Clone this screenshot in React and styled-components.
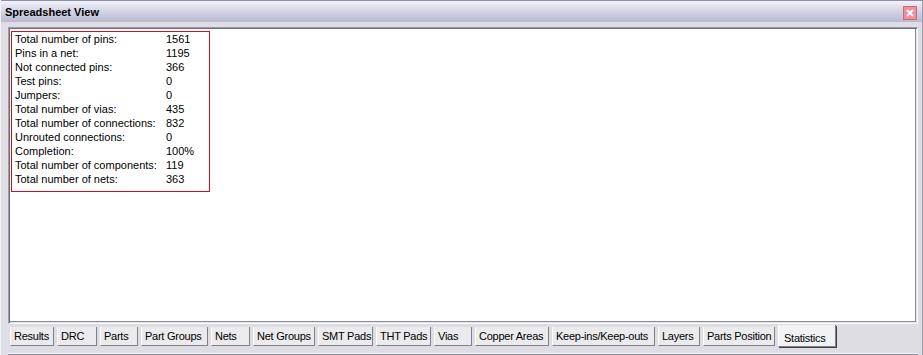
import React from 'react';
import styled, { createGlobalStyle } from 'styled-components';

const GlobalStyle = createGlobalStyle`
  html, body {
    margin: 0;
    padding: 0;
    background: #dedde4;
  }
  body {
    font-family: Tahoma, "Liberation Sans", Arial, sans-serif;
    font-size: 11px;
    color: #000;
  }
`;

const Window = styled.div`
  width: 923px;
  height: 355px;
  box-sizing: border-box;
  display: flex;
  flex-direction: column;
  background: #dedde4;
  border-left: 1px solid #f4f4f8;
  border-right: 1px solid #9a9aa8;
`;

const TitleBar = styled.div`
  height: 22px;
  flex-shrink: 0;
  display: flex;
  align-items: center;
  justify-content: space-between;
  padding: 0 5px 0 4px;
  box-sizing: border-box;
  border-top: 1px solid #8c8cac;
  background: linear-gradient(to bottom, #f2f2f8 0%, #d6d6e6 45%, #b9b9d2 100%);
`;

const Title = styled.span`
  font-weight: bold;
  font-size: 11px;
  line-height: 13px;
  margin-top: 2px;
`;

const CloseButton = styled.div`
  width: 12px;
  height: 12px;
  margin-top: 3px;
  border: 1px solid #c46a78;
  background: #f0909c;
  display: flex;
  align-items: center;
  justify-content: center;
`;

const Body = styled.div`
  flex: 1;
  display: flex;
  flex-direction: column;
  padding: 5px 4px 0 7px;
  min-height: 0;
`;

const Panel = styled.div`
  height: 297px;
  flex-shrink: 0;
  box-sizing: border-box;
  background: #fff;
  border-top: 1px solid #9c9ca6;
  border-left: 1px solid #9c9ca6;
  border-right: 1px solid #f8f8fa;
  border-bottom: 1px solid #f8f8fa;
  box-shadow: inset 1px 1px 0 #6e6e76, inset -1px -1px 0 #e6e6ea, inset -2px -2px 0 #8a8a94;
  padding: 3px 0 0 2px;
`;

const StatsBox = styled.div`
  width: 199px;
  box-sizing: border-box;
  border: 1px solid #cc1020;
  padding: 0 0 5px 3px;
  display: grid;
  grid-template-columns: 151px 1fr;
  grid-auto-rows: 14px;
  line-height: 14px;
`;

const Label = styled.span`
  white-space: nowrap;
`;

const Value = styled.span`
  white-space: nowrap;
`;

const TabStrip = styled.div`
  flex: 1;
  display: flex;
  align-items: flex-start;
  padding: 3px 0 0 2px;
  border-bottom: 1px solid #8a8a96;
  box-shadow: inset 0 -1px 0 #f4f4f8, 0 1px 0 #ececf0;
`;

const Tab = styled.div`
  width: ${(p) => p.$w}px;
  height: ${(p) => (p.$active ? 22 : 19)}px;
  margin-top: ${(p) => (p.$active ? -2 : 0)}px;
  margin-right: ${(p) => (p.$active ? 0 : 3)}px;
  box-sizing: border-box;
  padding: ${(p) => (p.$active ? '7px 0 0 5px' : '3px 0 0 3px')};
  background: ${(p) => (p.$active ? '#f2f2f4' : '#ebebee')};
  border-left: 1px solid #fff;
  border-right: 1px solid #808086;
  border-bottom: 1px solid #808086;
  box-shadow: ${(p) => (p.$active ? '1px 1px 0 #404046' : 'none')};
  white-space: nowrap;
  overflow: hidden;
  letter-spacing: -0.25px;
  line-height: 13px;
`;

const stats = [
  ['Total number of pins:', '1561'],
  ['Pins in a net:', '1195'],
  ['Not connected pins:', '366'],
  ['Test pins:', '0'],
  ['Jumpers:', '0'],
  ['Total number of vias:', '435'],
  ['Total number of connections:', '832'],
  ['Unrouted connections:', '0'],
  ['Completion:', '100%'],
  ['Total number of components:', '119'],
  ['Total number of nets:', '363'],
];

const tabs = [
  ['Results', 44],
  ['DRC', 40],
  ['Parts', 38],
  ['Part Groups', 67],
  ['Nets', 39],
  ['Net Groups', 62],
  ['SMT Pads', 55],
  ['THT Pads', 55],
  ['Vias', 38],
  ['Copper Areas', 74],
  ['Keep-ins/Keep-outs', 103],
  ['Layers', 42],
  ['Parts Position', 72],
  ['Statistics', 58],
];

const App = () => (
  <>
    <GlobalStyle />
    <Window>
      <TitleBar>
        <Title>Spreadsheet View</Title>
        <CloseButton>
          <svg width="8" height="8" viewBox="0 0 8 8">
            <path d="M1 1 L7 7 M7 1 L1 7" stroke="#fff" strokeWidth="1.8" />
          </svg>
        </CloseButton>
      </TitleBar>
      <Body>
        <Panel>
          <StatsBox>
            {stats.map(([label, value]) => (
              <React.Fragment key={label}>
                <Label>{label}</Label>
                <Value>{value}</Value>
              </React.Fragment>
            ))}
          </StatsBox>
        </Panel>
        <TabStrip>
          {tabs.map(([name, w]) => (
            <Tab key={name} $w={w} $active={name === 'Statistics'}>
              {name}
            </Tab>
          ))}
        </TabStrip>
      </Body>
    </Window>
  </>
);

export default App;
